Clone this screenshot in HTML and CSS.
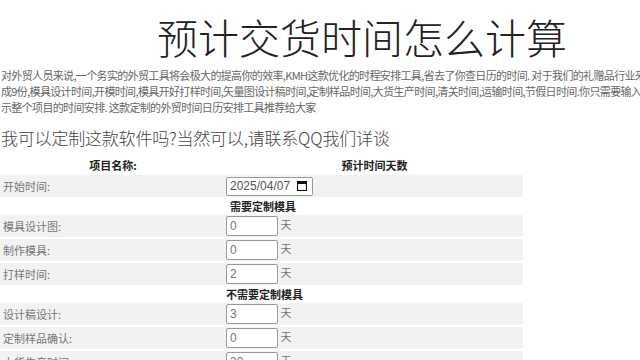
FILE: index.html
```html
<!DOCTYPE html>
<html lang="zh">
<head>
<meta charset="UTF-8">
<meta name="viewport" content="width=device-width, initial-scale=1.0">
<title>预计交货时间怎么计算</title>
<link rel="stylesheet" href="styles.css">
</head>
<body>
    <div class="page">
        <h1 class="title">预计交货时间怎么计算</h1>
        <p class="intro">对外贸人员来说,一个务实的外贸工具将会极大的提高你的效率,KMH这款优化的时程安排工具,省去了你查日历的时间. 对于我们的礼赠品行业来说,一个项目的时间可以分成9份,模具设计时间,开模时间,模具开好打样时间,矢量图设计稿时间,定制样品时间,大货生产时间,清关时间,运输时间,节假日时间.你只需要输入各阶段对应的天数,就可以显示整个项目的时间安排. 这款定制的外贸时间日历安排工具推荐给大家</p>
        <h2 class="ask">我可以定制这款软件吗?当然可以,请联系QQ我们详谈</h2>

        <table class="plan">
            <tr class="head">
                <th>项目名称:</th>
                <th>预计时间天数</th>
            </tr>
            <tr class="row">
                <td>开始时间:</td>
                <td>
                    <span class="date">
                        <input type="text" value="2025/04/07">
                        <svg class="cal" width="10" height="10" viewBox="0 0 10 10">
                            <rect x="0.5" y="0.5" width="9" height="9" fill="none" stroke="#111" stroke-width="1.2"/>
                            <rect x="0.5" y="0.5" width="9" height="2.5" fill="#111"/>
                        </svg>
                    </span>
                </td>
            </tr>
            <tr class="group">
                <td></td>
                <td class="indent">需要定制模具</td>
            </tr>
            <tr class="row">
                <td>模具设计图:</td>
                <td><input class="num" type="number" value="0"> 天</td>
            </tr>
            <tr class="row">
                <td>制作模具:</td>
                <td><input class="num" type="number" value="0"> 天</td>
            </tr>
            <tr class="row">
                <td>打样时间:</td>
                <td><input class="num" type="number" value="2"> 天</td>
            </tr>
            <tr class="group">
                <td></td>
                <td>不需要定制模具</td>
            </tr>
            <tr class="row">
                <td>设计稿设计:</td>
                <td><input class="num" type="number" value="3"> 天</td>
            </tr>
            <tr class="row">
                <td>定制样品确认:</td>
                <td><input class="num" type="number" value="0"> 天</td>
            </tr>
            <tr class="row">
                <td>大货生产时间:</td>
                <td><input class="num" type="number" value="30"> 天</td>
            </tr>
            <tr class="row">
                <td>清关时间:</td>
                <td><input class="num" type="number" value="3"> 天</td>
            </tr>
        </table>
    </div>
</body>
</html>
```
FILE: styles.css
```css
html, body {
    margin: 0;
    padding: 0;
    overflow: hidden;
}
body {
    font-family: "Noto Sans CJK SC", "Liberation Sans", sans-serif;
    color: #333;
}
.page {
    width: 724px;
}
.title {
    margin: 0;
    padding-top: 5px;
    text-align: center;
    font-size: 41px;
    font-weight: 300;
    line-height: 62px;
    color: #222;
}
.intro {
    width: 770px;
    margin: 0;
    padding-left: 1px;
    font-size: 11px;
    line-height: 16px;
    color: #666;
    letter-spacing: -0.65px;
}
.ask {
    margin: 11px 0 0;
    padding-left: 1px;
    font-size: 17px;
    font-weight: 300;
    line-height: 24px;
    color: #444;
    letter-spacing: -0.2px;
}
.plan {
    width: 523px;
    margin-top: 4px;
    border-collapse: separate;
    border-spacing: 0 2px;
    font-size: 11px;
}
.plan th {
    font-weight: bold;
    color: #222;
    height: 17px;
    padding: 0;
}
.plan th:first-child {
    width: 226px;
}
.plan td {
    padding: 0 3px;
    height: 22px;
    color: #777;
}
.plan td:last-child {
    padding-left: 0;
}
.row td {
    background: #f2f2f2;
}
.group td {
    font-weight: bold;
    color: #222;
    height: 14px;
    line-height: 14px;
    padding-left: 0;
}
.group td.indent {
    padding-left: 4px;
}
.date {
    position: relative;
    display: inline-block;
    vertical-align: middle;
}
.date input, .num {
    box-sizing: border-box;
    height: 20px;
    border: 1px solid #999;
    border-radius: 2px;
    padding: 0 3px;
    font-family: "Liberation Sans", sans-serif;
    font-size: 12px;
    color: #777;
    vertical-align: middle;
    background: #fff;
}
.date input {
    width: 87px;
    height: 19px;
    color: #555;
    display: block;
}
.cal {
    position: absolute;
    right: 6px;
    top: 4px;
}
.num {
    width: 52px;
}
```
